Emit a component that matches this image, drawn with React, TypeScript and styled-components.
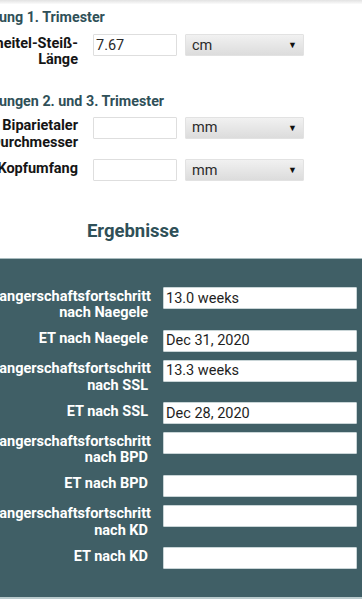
import React from "react";
import styled, { createGlobalStyle } from "styled-components";

const GlobalStyle = createGlobalStyle`
  html, body {
    margin: 0;
    padding: 0;
    background: #ffffff;
    overflow-x: hidden;
  }
  body {
    font-family: Roboto, "Liberation Sans", Arial, sans-serif;
  }
`;

const TopShade = styled.div`
  height: 4px;
  background: linear-gradient(#e2e2e2, #fbfbfb);
`;

/* the page is wider than the phone screen, we see it scrolled a bit to the right */
const Page = styled.div`
  margin-left: -36px;
  width: calc(100% + 36px);
`;

const FormSection = styled.section`
  padding: 3px 0 0 0;
`;

const GroupTitle = styled.h3<{ $top?: number; $bottom?: number }>`
  margin: ${(p) => p.$top ?? 0}px 0 ${(p) => p.$bottom ?? 7}px 0;
  font-size: 14.3px;
  line-height: 20px;
  font-weight: 700;
  color: #2f5058;
  white-space: nowrap;
`;

const Row = styled.div<{ $labelWidth: number }>`
  display: flex;
  align-items: flex-start;
  gap: 15px;
  margin-bottom: 8px;

  & > label {
    width: ${(p) => p.$labelWidth}px;
  }
`;

const Label = styled.label<{ $light?: boolean }>`
  flex-shrink: 0;
  padding-top: 1.5px;
  text-align: right;
  font-size: 14.5px;
  line-height: 16.5px;
  font-weight: 700;
  color: ${(p) => (p.$light ? "#ffffff" : "#151515")};
`;

const Controls = styled.div`
  display: flex;
  gap: 8px;
`;

const TextInput = styled.input<{ $width: number }>`
  box-sizing: border-box;
  width: ${(p) => p.$width}px;
  height: 22px;
  margin: 0;
  padding: 0 2px;
  border: 1px solid #dedede;
  border-radius: 1px;
  background: #ffffff;
  font-family: Roboto, "Liberation Sans", Arial, sans-serif;
  font-size: 14.5px;
  color: #2a2a2a;
  outline: none;
`;

const SelectBox = styled.div`
  box-sizing: border-box;
  width: 119px;
  height: 22px;
  padding: 0 6px 0 6px;
  display: flex;
  align-items: center;
  justify-content: space-between;
  background: linear-gradient(#f1f1f1, #dcdcdc);
  border: 1px solid #e2e2e2;
  border-radius: 1px;
  font-size: 14.5px;
  color: #2a2a2a;
`;

const Arrow = styled.span`
  font-size: 9px;
  color: #111111;
`;

const ResultsTitle = styled.h2`
  width: 338px;
  margin: 38px 0 15px 0;
  text-align: center;
  font-size: 18.5px;
  line-height: 24px;
  font-weight: 700;
  color: #2f5058;
`;

const ResultsPanel = styled.div`
  background: #405f66;
  border-top: 1px solid #a8bbbe;
  border-bottom: 2px solid #b9cacc;
  padding: 28px 0 20px 0;
`;

const ResultInput = styled(TextInput)`
  border-color: #c9d5d7;
  color: #1e1e1e;
`;

type Measure = { label: React.ReactNode; value: string; unit: string };

const trimester1: Measure[] = [
  { label: <>Scheitel-Steiß-<br />Länge</>, value: "7.67", unit: "cm" },
];

const trimester23: Measure[] = [
  { label: <>Biparietaler<br />Durchmesser</>, value: "", unit: "mm" },
  { label: "Kopfumfang", value: "", unit: "mm" },
];

const results: { label: React.ReactNode; value: string }[] = [
  { label: <>Schwangerschaftsfortschritt<br />nach Naegele</>, value: "13.0 weeks" },
  { label: "ET nach Naegele", value: "Dec 31, 2020" },
  { label: <>Schwangerschaftsfortschritt<br />nach SSL</>, value: "13.3 weeks" },
  { label: "ET nach SSL", value: "Dec 28, 2020" },
  { label: <>Schwangerschaftsfortschritt<br />nach BPD</>, value: "" },
  { label: "ET nach BPD", value: "" },
  { label: <>Schwangerschaftsfortschritt<br />nach KD</>, value: "" },
  { label: "ET nach KD", value: "" },
];

const MeasureRow: React.FC<{ m: Measure }> = ({ m }) => (
  <Row $labelWidth={114}>
    <Label>{m.label}</Label>
    <Controls>
      <TextInput $width={84} readOnly value={m.value} />
      <SelectBox>
        {m.unit}
        <Arrow>▼</Arrow>
      </SelectBox>
    </Controls>
  </Row>
);

export default function App() {
  return (
    <>
      <GlobalStyle />
      <TopShade />
      <Page>
        <FormSection>
          <GroupTitle>Messung 1. Trimester</GroupTitle>
          {trimester1.map((m, i) => (
            <MeasureRow key={i} m={m} />
          ))}
          <GroupTitle $top={22} $bottom={6}>
            Messungen 2. und 3. Trimester
          </GroupTitle>
          {trimester23.map((m, i) => (
            <MeasureRow key={i} m={m} />
          ))}
        </FormSection>

        <ResultsTitle>Ergebnisse</ResultsTitle>

        <ResultsPanel>
          {results.map((r, i) => (
            <Row key={i} $labelWidth={184}>
              <Label $light>{r.label}</Label>
              <ResultInput $width={194} readOnly value={r.value} />
            </Row>
          ))}
        </ResultsPanel>
      </Page>
    </>
  );
}
